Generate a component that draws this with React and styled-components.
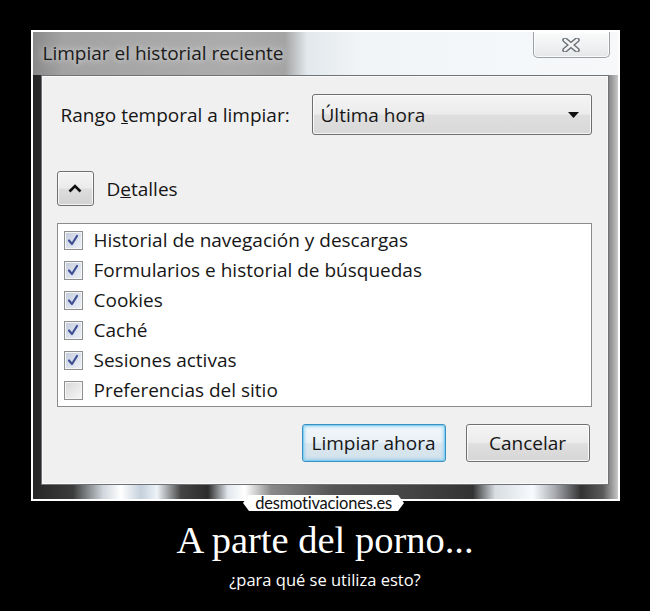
import React from "react";
import styled, { createGlobalStyle } from "styled-components";

const GlobalStyle = createGlobalStyle`
  html, body { margin: 0; padding: 0; background: #000; }
  body { width: 650px; height: 611px; overflow: hidden; }
`;

const Poster = styled.div`
  position: relative;
  width: 650px;
  height: 611px;
  background: #000;
  display: flex;
  flex-direction: column;
  align-items: center;
`;

const Frame = styled.div`
  margin-top: 30px;
  width: 585px;
  height: 467px;
  border: 2px solid #fff;
  flex-shrink: 0;
`;

const Window = styled.div`
  width: 100%;
  height: 100%;
  display: flex;
  flex-direction: column;
  background: linear-gradient(
    to right,
    #262626 0px,
    #3c3c3c 40px,
    #cfd6dc 70px,
    #ffffff 88px,
    #c4d0dc 108px,
    #eef3f8 124px,
    #444 148px,
    #2c2c2c 175px,
    #e3e8ee 195px,
    #ffffff 212px,
    #8a8a8a 238px,
    #555 300px,
    #444 380px,
    #333 440px,
    #d8dde2 462px,
    #f7fbff 500px,
    #a8aab0 522px,
    #333 548px,
    #5a5a5a 570px,
    #c8c8c8 585px
  );
`;

const TitleBar = styled.div`
  height: 43px;
  flex-shrink: 0;
  display: flex;
  align-items: flex-start;
  padding-right: 8px;
  background: linear-gradient(
    to right,
    #8a8a8a 0px,
    #a2a2a2 30px,
    #acacac 200px,
    #a4a4a4 252px,
    #e2e8ec 274px,
    #f2f5f7 330px,
    #f6f8fa 100%
  );
`;

const Title = styled.div`
  margin: 7px 0 0 10px;
  font-family: "Open Sans", "Noto Sans", sans-serif;
  font-size: 19px;
  line-height: 28px;
  color: #1a1a1a;
  text-shadow: 0 0 6px rgba(225, 225, 225, 0.9), 0 0 12px rgba(215, 215, 215, 0.8);
`;

const CloseButton = styled.div`
  margin-left: auto;
  width: 77px;
  height: 26px;
  box-sizing: border-box;
  border: 1px solid #9aa0a6;
  border-top: none;
  border-radius: 0 0 5px 5px;
  background: linear-gradient(#fbfbfb, #eef0f2 60%, #e4e6e8);
  box-shadow: inset 0 0 0 1px rgba(255, 255, 255, 0.8);
  display: flex;
  align-items: center;
  justify-content: center;
`;

const Body = styled.div`
  flex: 1;
  margin: 0 9px 14px 8px;
  background: #f0f0f0;
  border: 1px solid #6f7377;
  box-shadow: inset 0 0 0 1px #fafafa;
  padding: 18px 16px 0 15px;
  display: flex;
  flex-direction: column;
  font-family: "Open Sans", "Noto Sans", sans-serif;
  font-size: 19px;
  color: #161616;
`;

const RangeRow = styled.div`
  display: flex;
  align-items: center;
  justify-content: space-between;
  height: 41px;
`;

const Label = styled.span`
  padding-left: 4px;
`;

const Select = styled.div`
  width: 280px;
  height: 41px;
  box-sizing: border-box;
  border: 1px solid #6e6e6e;
  border-radius: 3px;
  background: linear-gradient(#f4f4f4, #ececec 48%, #dfdfdf 52%, #d8d8d8);
  box-shadow: inset 0 0 0 1px rgba(255, 255, 255, 0.75);
  display: flex;
  align-items: center;
  justify-content: space-between;
  padding: 0 12px 0 8px;
`;

const DetailsRow = styled.div`
  margin-top: 36px;
  display: flex;
  align-items: center;
  gap: 13px;
`;

const ToggleButton = styled.div`
  width: 37px;
  height: 35px;
  box-sizing: border-box;
  border: 1px solid #707070;
  border-radius: 3px;
  background: linear-gradient(#f4f4f4, #ebebeb 48%, #dddddd 52%, #d2d2d2);
  box-shadow: inset 0 0 0 1px rgba(255, 255, 255, 0.75);
  display: flex;
  align-items: center;
  justify-content: center;
`;

const List = styled.div`
  margin-top: 17px;
  width: 535px;
  height: 184px;
  box-sizing: border-box;
  border: 1px solid #8a8c8e;
  background: #fff;
  padding: 1px 0 0 6px;
  display: flex;
  flex-direction: column;
`;

const Row = styled.div`
  height: 30px;
  display: flex;
  align-items: center;
  gap: 11px;
`;

const Box = styled.div`
  width: 19px;
  height: 19px;
  box-sizing: border-box;
  border: 1px solid #8e8f8f;
  box-shadow: inset 0 0 0 1px #f6f6f6;
  background: ${(p) =>
    p.$checked
      ? "linear-gradient(135deg, #c2cadb, #e2e7f1 70%, #eef1f7)"
      : "linear-gradient(135deg, #d8d8d8, #eeeeee 70%, #f8f8f8)"};
  display: flex;
  align-items: center;
  justify-content: center;
`;

const ButtonRow = styled.div`
  margin-top: 17px;
  display: flex;
  justify-content: flex-end;
  gap: 20px;
  padding-right: 2px;
`;

const Button = styled.div`
  width: ${(p) => p.$w}px;
  height: 38px;
  box-sizing: border-box;
  border-radius: 3px;
  display: flex;
  align-items: center;
  justify-content: center;
  border: 1px solid ${(p) => (p.$primary ? "#3d8fc0" : "#707070")};
  background: ${(p) =>
    p.$primary
      ? "linear-gradient(#f2f7fa, #e9f1f6 48%, #dbe7ef 52%, #d2e1ea)"
      : "linear-gradient(#f4f4f4, #ececec 48%, #dfdfdf 52%, #d6d6d6)"};
  box-shadow: ${(p) =>
    p.$primary
      ? "inset 0 0 0 1px #7fd0f5, inset 0 0 3px 2px rgba(120, 200, 240, 0.6)"
      : "inset 0 0 0 1px rgba(255,255,255,0.8)"};
`;

const Logo = styled.div`
  position: absolute;
  left: 243px;
  top: 495px;
  width: 161px;
  height: 16px;
  background: #fff;
  clip-path: polygon(6px 0, calc(100% - 6px) 0, 100% 50%, calc(100% - 6px) 100%, 6px 100%, 0 50%);
  display: flex;
  align-items: center;
  justify-content: center;
  font-family: "Lato", "Noto Sans", sans-serif;
  font-size: 16.5px;
  line-height: 16px;
  color: #111;
  letter-spacing: -0.2px;
`;

const Headline = styled.div`
  margin-top: 19px;
  font-family: "Liberation Serif", "Times New Roman", serif;
  font-size: 38.5px;
  line-height: 40px;
  color: #fff;
`;

const Subline = styled.div`
  margin-top: 11px;
  font-family: "Open Sans", "Noto Sans", sans-serif;
  font-size: 16.5px;
  line-height: 18px;
  color: #fff;
`;

const Check = () => (
  <svg width="14" height="14" viewBox="0 0 14 14">
    <path d="M3 7.5 L6 11 L11 3" fill="none" stroke="#3f5194" strokeWidth="2.2" strokeLinecap="round" strokeLinejoin="round" />
  </svg>
);

const items = [
  ["Historial de navegación y descargas", true],
  ["Formularios e historial de búsquedas", true],
  ["Cookies", true],
  ["Caché", true],
  ["Sesiones activas", true],
  ["Preferencias del sitio", false],
];

export default function App() {
  return (
    <Poster>
      <GlobalStyle />
      <Frame>
        <Window>
          <TitleBar>
            <Title>Limpiar el historial reciente</Title>
            <CloseButton>
              <svg width="20" height="14" viewBox="0 0 20 14">
                <path d="M4 2 L16 12 M16 2 L4 12" stroke="#6d7278" strokeWidth="5.5" strokeLinecap="round" />
                <path d="M4 2 L16 12 M16 2 L4 12" stroke="#f4f4f4" strokeWidth="2.6" strokeLinecap="round" />
              </svg>
            </CloseButton>
          </TitleBar>
          <Body>
            <RangeRow>
              <Label>
                Rango <u>t</u>emporal a limpiar:
              </Label>
              <Select>
                <span>Última hora</span>
                <svg width="11" height="6" viewBox="0 0 11 6">
                  <path d="M0 0 L11 0 L5.5 6 Z" fill="#111" />
                </svg>
              </Select>
            </RangeRow>
            <DetailsRow>
              <ToggleButton>
                <svg width="14" height="9" viewBox="0 0 14 9">
                  <path d="M1.5 7.5 L7 2 L12.5 7.5" fill="none" stroke="#111" strokeWidth="2.6" />
                </svg>
              </ToggleButton>
              <span>
                D<u>e</u>talles
              </span>
            </DetailsRow>
            <List>
              {items.map(([t, c]) => (
                <Row key={t}>
                  <Box $checked={c}>{c && <Check />}</Box>
                  <span>{t}</span>
                </Row>
              ))}
            </List>
            <ButtonRow>
              <Button $primary $w={144}>Limpiar ahora</Button>
              <Button $w={124}>Cancelar</Button>
            </ButtonRow>
          </Body>
        </Window>
      </Frame>
      <Logo>desmotivaciones.es</Logo>
      <Headline>A parte del porno...</Headline>
      <Subline>¿para qué se utiliza esto?</Subline>
    </Poster>
  );
}
